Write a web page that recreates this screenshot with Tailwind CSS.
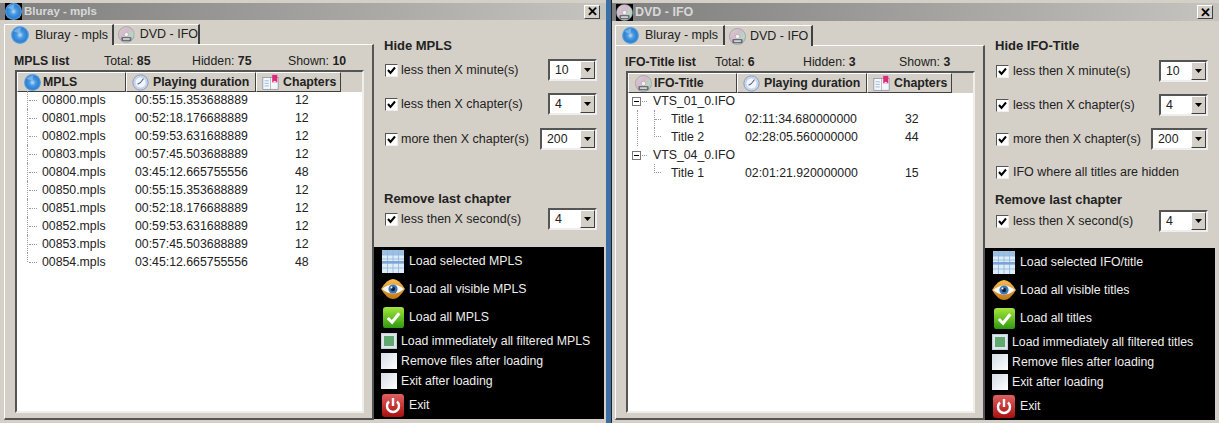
<!DOCTYPE html>
<html lang="en">
<head>
  <meta charset="UTF-8" />
  <title>Bluray - mpls | DVD - IFO</title>
  <script src="https://cdn.jsdelivr.net/npm/@tailwindcss/browser@4"></script>
</head>
<body class="bg-[#d4d0c8] overflow-hidden font-['Liberation_Sans',sans-serif] text-[12.3px] text-[#222]">

  <!-- Shared icons -->
  <svg class="absolute w-0 h-0">
    <defs>
      <radialGradient id="blu" cx="50%" cy="50%" r="55%"><stop offset="0" stop-color="#a8d8f8"/><stop offset=".35" stop-color="#4a98e0"/><stop offset=".7" stop-color="#2f80d0"/><stop offset="1" stop-color="#7cbcec"/></radialGradient>
      <linearGradient id="dvdg" x1="0" y1="0" x2="1" y2="1"><stop offset="0" stop-color="#c9d6c8"/><stop offset=".4" stop-color="#d8b8cc"/><stop offset=".7" stop-color="#b8d8c0"/><stop offset="1" stop-color="#b0b0c0"/></linearGradient>
      <linearGradient id="grn" x1="0" y1="0" x2="0" y2="1"><stop offset="0" stop-color="#a4e63c"/><stop offset="1" stop-color="#2f9a10"/></linearGradient>
      <linearGradient id="red" x1="0" y1="0" x2="0" y2="1"><stop offset="0" stop-color="#e06060"/><stop offset="1" stop-color="#a81010"/></linearGradient>
      <linearGradient id="iris" x1="0" y1="0" x2="0" y2="1"><stop offset="0" stop-color="#f8bc50"/><stop offset="1" stop-color="#c07818"/></linearGradient>
      <symbol id="i-blu" viewBox="0 0 20 20"><circle cx="10" cy="10" r="10" fill="url(#blu)"/><path d="M3 6Q6 2 11 1.500L10 8Z" fill="#a8d4f6" opacity=".5"/><circle cx="10" cy="10" r="1.600" fill="#9fd0f5"/></symbol>
      <symbol id="i-dvd" viewBox="0 0 20 20"><circle cx="10" cy="10" r="9.500" fill="url(#dvdg)" stroke="#8f8f9a" stroke-width=".7"/><circle cx="10" cy="10" r="2.600" fill="#f2f2f2" stroke="#888" stroke-width=".5"/><rect x="4" y="13" width="12" height="5" rx="1" fill="#6d6d78"/><rect x="6" y="14.500" width="8" height="1.800" fill="#e4e4e4"/></symbol>
      <symbol id="i-clock" viewBox="0 0 20 20"><circle cx="10" cy="10" r="9" fill="#c9d8ee" stroke="#7d92b8"/><circle cx="10" cy="10" r="6.500" fill="#f2f6fc" stroke="#a8b8d0" stroke-width=".6"/><path d="M10 10L13.500 5.500M10 10L6.500 12" stroke="#55658a" stroke-width="1.200" fill="none"/></symbol>
      <symbol id="i-book" viewBox="0 0 20 20"><rect x="1" y="4" width="18" height="14" fill="#f4f6fa" stroke="#7a869a" stroke-width=".8"/><path d="M10 4V18" stroke="#9aa4b4" stroke-width=".8"/><path d="M3 8H8M3 11H8M3 14H8" stroke="#8fb0d8"/><rect x="12" y="1" width="6" height="9" fill="#e0287c"/><path d="M12 10L15 8L18 10Z" fill="#f4f6fa"/></symbol>
      <symbol id="i-grid" viewBox="0 0 22 23"><rect width="22" height="23" fill="#dcecf8"/><rect y="0" width="22" height="5" fill="#9cc0e4"/><path d="M0 5H22M0 9H22M0 13H22M0 18H22M5.500 0V23M11 0V23M16.500 0V23" stroke="#8fb4da" stroke-width=".8"/><rect y="11" width="22" height="2.500" fill="#7ca4d4"/></symbol>
      <symbol id="i-eye" viewBox="0 0 24 20"><path d="M0 10Q12 -10 24 10Q12 30 0 10Z" fill="url(#iris)"/><path d="M1 10Q12 1 23 10Q12 19 1 10Z" fill="#f8fafc"/><circle cx="12" cy="10" r="4.600" fill="#3c78b8"/><circle cx="12" cy="10" r="2.200" fill="#10203a"/><circle cx="10.500" cy="8.500" r="1" fill="#fff"/></symbol>
      <symbol id="i-check" viewBox="0 0 22 22"><rect width="22" height="22" rx="3" fill="url(#grn)"/><path d="M5 11.500L9.500 16L17 6.500" fill="none" stroke="#fff" stroke-width="3.200"/></symbol>
      <symbol id="i-power" viewBox="0 0 22 23"><rect width="22" height="23" rx="3" fill="url(#red)"/><path d="M7 7.500A6 6 0 1 0 15 7.500" fill="none" stroke="#fff" stroke-width="2.400"/><path d="M11 4V12" stroke="#fff" stroke-width="2.400"/></symbol>
      <symbol id="i-tick" viewBox="0 0 9 9"><path d="M1 4L3.500 7L8 1.500" fill="none" stroke="#000" stroke-width="2"/></symbol>
      <symbol id="i-arrow" viewBox="0 0 7 4"><path d="M0 0H7L3.500 4Z" fill="#000"/></symbol>
    </defs>
  </svg>

  <div class="flex w-[1219px] h-[423px]">

    <!-- Bluray window -->
    <div class="w-[606px] h-[423px] pt-[3px] flex flex-col">
      <div class="h-[17px] flex items-center bg-gradient-to-r from-[#7e7e7e] to-[#c6c4bf] text-[#d8d8d8] font-bold text-[11.5px] pr-[6px]">
        <span class="w-[17px] h-[17px] bg-black flex items-center justify-center ml-[5px] mr-[2px]"><svg class="w-[17px] h-[17px]"><use href="#i-blu"/></svg></span>
        <span class="flex-1">Bluray - mpls</span>
        <span class="w-[16px] h-[14px] bg-[#d4d0c8] border border-t-white border-l-white border-r-[#404040] border-b-[#404040] flex items-center justify-center text-black text-[13px] font-bold leading-none">✕</span>
      </div>
      <div class="flex flex-1">
        <div class="w-[374px] pl-[4px] pt-[3px] flex flex-col">
          <div class="flex h-[21px] items-end relative z-10">
            <div class="w-[110px] h-[21px] -mb-px flex items-center bg-[#d4d0c8] border-t border-l border-white border-r-2 border-r-[#404040] pl-[6px] gap-[6px] text-[12.5px] whitespace-nowrap">
              <svg class="w-[18px] h-[18px]"><use href="#i-blu"/></svg>Bluray - mpls
            </div>
            <div class="w-[86px] h-[20px] flex items-center bg-[#d4d0c8] border-t border-white border-r-2 border-r-[#404040] pl-[4px] gap-[5px] text-[12.5px] whitespace-nowrap">
              <svg class="w-[17px] h-[17px]"><use href="#i-dvd"/></svg>DVD - IFO
            </div>
          </div>
          <div class="w-[370px] h-[376px] border-t border-l border-white border-r-2 border-b-2 border-r-[#555] border-b-[#555] pl-[10px] pr-[8px] flex flex-col">
            <div class="h-[25px] pt-[7px] -ml-[1px] flex items-center font-bold">
              <span class="w-[90px]">MPLS list</span>
              <span class="w-[88px] font-normal">Total: <b>85</b></span>
              <span class="w-[96px] font-normal">Hidden: <b>75</b></span>
              <span class="font-normal">Shown: <b>10</b></span>
            </div>
            <div class="w-[349px] h-[343px] border-2 border-t-[#555] border-l-[#555] border-r-[#efeee9] border-b-[#efeee9] bg-white flex flex-col">
              <div class="h-[20px] flex bg-[#d4d0c8] font-bold">
                <div class="w-[109px] flex items-center gap-[2px] pl-[6px] border border-t-white border-l-white border-r-[#404040] border-b-[#404040]"><svg class="w-[17px] h-[17px]"><use href="#i-blu"/></svg>MPLS</div>
                <div class="w-[130px] flex items-center gap-[4px] pl-[5px] border border-t-white border-l-white border-r-[#404040] border-b-[#404040]"><svg class="w-[17px] h-[17px]"><use href="#i-clock"/></svg>Playing duration</div>
                <div class="w-[85px] flex items-center gap-[4px] pl-[5px] border border-t-white border-l-white border-r-[#404040] border-b-[#404040]"><svg class="w-[17px] h-[17px]"><use href="#i-book"/></svg>Chapters</div>
              </div>
              <div class="-mt-[1px]">
                <div class="h-[18px] flex items-center"><span class="w-[2px] h-[18px] ml-[10px] border-l border-dotted border-[#999]"></span><span class="w-[8px] border-t border-dotted border-[#999] mr-[5px]"></span><span class="w-[93px]">00800.mpls</span><span class="w-[160px]">00:55:15.353688889</span><span>12</span></div>
                <div class="h-[18px] flex items-center"><span class="w-[2px] h-[18px] ml-[10px] border-l border-dotted border-[#999]"></span><span class="w-[8px] border-t border-dotted border-[#999] mr-[5px]"></span><span class="w-[93px]">00801.mpls</span><span class="w-[160px]">00:52:18.176688889</span><span>12</span></div>
                <div class="h-[18px] flex items-center"><span class="w-[2px] h-[18px] ml-[10px] border-l border-dotted border-[#999]"></span><span class="w-[8px] border-t border-dotted border-[#999] mr-[5px]"></span><span class="w-[93px]">00802.mpls</span><span class="w-[160px]">00:59:53.631688889</span><span>12</span></div>
                <div class="h-[18px] flex items-center"><span class="w-[2px] h-[18px] ml-[10px] border-l border-dotted border-[#999]"></span><span class="w-[8px] border-t border-dotted border-[#999] mr-[5px]"></span><span class="w-[93px]">00803.mpls</span><span class="w-[160px]">00:57:45.503688889</span><span>12</span></div>
                <div class="h-[18px] flex items-center"><span class="w-[2px] h-[18px] ml-[10px] border-l border-dotted border-[#999]"></span><span class="w-[8px] border-t border-dotted border-[#999] mr-[5px]"></span><span class="w-[93px]">00804.mpls</span><span class="w-[160px]">03:45:12.665755556</span><span>48</span></div>
                <div class="h-[18px] flex items-center"><span class="w-[2px] h-[18px] ml-[10px] border-l border-dotted border-[#999]"></span><span class="w-[8px] border-t border-dotted border-[#999] mr-[5px]"></span><span class="w-[93px]">00850.mpls</span><span class="w-[160px]">00:55:15.353688889</span><span>12</span></div>
                <div class="h-[18px] flex items-center"><span class="w-[2px] h-[18px] ml-[10px] border-l border-dotted border-[#999]"></span><span class="w-[8px] border-t border-dotted border-[#999] mr-[5px]"></span><span class="w-[93px]">00851.mpls</span><span class="w-[160px]">00:52:18.176688889</span><span>12</span></div>
                <div class="h-[18px] flex items-center"><span class="w-[2px] h-[18px] ml-[10px] border-l border-dotted border-[#999]"></span><span class="w-[8px] border-t border-dotted border-[#999] mr-[5px]"></span><span class="w-[93px]">00852.mpls</span><span class="w-[160px]">00:59:53.631688889</span><span>12</span></div>
                <div class="h-[18px] flex items-center"><span class="w-[2px] h-[18px] ml-[10px] border-l border-dotted border-[#999]"></span><span class="w-[8px] border-t border-dotted border-[#999] mr-[5px]"></span><span class="w-[93px]">00853.mpls</span><span class="w-[160px]">00:57:45.503688889</span><span>12</span></div>
                <div class="h-[18px] flex items-center"><span class="w-[2px] h-[9px] self-start ml-[10px] border-l border-dotted border-[#999]"></span><span class="w-[8px] border-t border-dotted border-[#999] mr-[5px]"></span><span class="w-[93px]">00854.mpls</span><span class="w-[160px]">03:45:12.665755556</span><span>48</span></div>
              </div>
            </div>
          </div>
        </div>
        <div class="w-[232px] flex flex-col">
          <div class="h-[227px] pl-[10px] pr-[9px] pt-[18px] flex flex-col">
            <div class="h-[16px] flex items-center font-bold text-[13px]">Hide MPLS</div>
            <div class="h-[22px] mt-[5px] flex items-center"><span class="w-[13px] h-[13px] ml-[1px] mr-[3px] bg-white border border-t-[#555] border-l-[#555] border-r-[#eee] border-b-[#eee] flex items-center justify-center"><svg class="w-[9px] h-[9px]"><use href="#i-tick"/></svg></span><span class="flex-1 text-[12.5px]">less then X minute(s)</span><span class="w-[49px] h-[22px] bg-white border-2 border-t-[#555] border-l-[#555] border-r-[#eee] border-b-[#eee] flex items-center pl-[5px]"><span class="flex-1">10</span><span class="w-[15px] h-[18px] bg-[#d4d0c8] border border-t-white border-l-white border-r-[#404040] border-b-[#404040] flex items-center justify-center"><svg class="w-[7px] h-[4px]"><use href="#i-arrow"/></svg></span></span></div>
            <div class="h-[22px] mt-[12px] flex items-center"><span class="w-[13px] h-[13px] ml-[1px] mr-[3px] bg-white border border-t-[#555] border-l-[#555] border-r-[#eee] border-b-[#eee] flex items-center justify-center"><svg class="w-[9px] h-[9px]"><use href="#i-tick"/></svg></span><span class="flex-1 text-[12.5px]">less then X chapter(s)</span><span class="w-[49px] h-[22px] bg-white border-2 border-t-[#555] border-l-[#555] border-r-[#eee] border-b-[#eee] flex items-center pl-[5px]"><span class="flex-1">4</span><span class="w-[15px] h-[18px] bg-[#d4d0c8] border border-t-white border-l-white border-r-[#404040] border-b-[#404040] flex items-center justify-center"><svg class="w-[7px] h-[4px]"><use href="#i-arrow"/></svg></span></span></div>
            <div class="h-[22px] mt-[13px] flex items-center"><span class="w-[13px] h-[13px] ml-[1px] mr-[3px] bg-white border border-t-[#555] border-l-[#555] border-r-[#eee] border-b-[#eee] flex items-center justify-center"><svg class="w-[9px] h-[9px]"><use href="#i-tick"/></svg></span><span class="flex-1 text-[12.5px]">more then X chapter(s)</span><span class="w-[57px] h-[22px] bg-white border-2 border-t-[#555] border-l-[#555] border-r-[#eee] border-b-[#eee] flex items-center pl-[5px]"><span class="flex-1">200</span><span class="w-[15px] h-[18px] bg-[#d4d0c8] border border-t-white border-l-white border-r-[#404040] border-b-[#404040] flex items-center justify-center"><svg class="w-[7px] h-[4px]"><use href="#i-arrow"/></svg></span></span></div>
            <div class="h-[16px] mt-[41px] flex items-center font-bold text-[13px]">Remove last chapter</div>
            <div class="h-[22px] mt-[1px] flex items-center"><span class="w-[13px] h-[13px] ml-[1px] mr-[3px] bg-white border border-t-[#555] border-l-[#555] border-r-[#eee] border-b-[#eee] flex items-center justify-center"><svg class="w-[9px] h-[9px]"><use href="#i-tick"/></svg></span><span class="flex-1 text-[12.5px]">less then X second(s)</span><span class="w-[49px] h-[22px] bg-white border-2 border-t-[#555] border-l-[#555] border-r-[#eee] border-b-[#eee] flex items-center pl-[5px]"><span class="flex-1">4</span><span class="w-[15px] h-[18px] bg-[#d4d0c8] border border-t-white border-l-white border-r-[#404040] border-b-[#404040] flex items-center justify-center"><svg class="w-[7px] h-[4px]"><use href="#i-arrow"/></svg></span></span></div>
          </div>
          <div class="w-[230px] h-[172px] bg-black text-[#eee]">
            <div class="h-[28px] flex items-center pl-[8px] gap-[5px]"><span class="w-[22px] flex justify-center"><svg class="w-[22px] h-[23px]"><use href="#i-grid"/></svg></span>Load selected MPLS</div>
            <div class="h-[28px] flex items-center pl-[8px] gap-[5px]"><span class="w-[22px] flex justify-center"><svg class="w-[24px] h-[20px] shrink-0"><use href="#i-eye"/></svg></span>Load all visible MPLS</div>
            <div class="h-[28px] flex items-center pl-[8px] gap-[5px]"><span class="w-[22px] flex justify-center"><svg class="w-[21px] h-[21px]"><use href="#i-check"/></svg></span>Load all MPLS</div>
            <div class="h-[20px] flex items-center pl-[7px] gap-[4px]"><span class="w-[16px] h-[16px] bg-[#dfe5ea] border border-[#c4d0dc] flex items-center justify-center"><span class="w-[10px] h-[10px] bg-[#5fa870]"></span></span>Load immediately all filtered MPLS</div>
            <div class="h-[20px] flex items-center pl-[7px] gap-[4px]"><span class="w-[16px] h-[16px] bg-gradient-to-br from-[#d4dce6] to-white"></span>Remove files after loading</div>
            <div class="h-[20px] flex items-center pl-[7px] gap-[4px]"><span class="w-[16px] h-[16px] bg-gradient-to-br from-[#d4dce6] to-white"></span>Exit after loading</div>
            <div class="h-[28px] flex items-center pl-[8px] gap-[5px]"><span class="w-[22px] flex justify-center"><svg class="w-[22px] h-[23px]"><use href="#i-power"/></svg></span>Exit</div>
          </div>
        </div>
      </div>
    </div>

    <!-- Desktop gap between the windows -->
    <div class="w-[6px] h-[423px] bg-[#3a6ea5] border-r border-[#222]"></div>

    <!-- DVD window -->
    <div class="w-[607px] h-[423px] pt-[3px] flex flex-col">
      <div class="h-[18px] flex items-center bg-gradient-to-r from-[#7e7e7e] to-[#c6c4bf] text-[#d8d8d8] font-bold text-[12.5px] pr-[6px]">
        <span class="w-[17px] h-[17px] bg-black flex items-center justify-center ml-[4px] mr-[2px]"><svg class="w-[17px] h-[17px]"><use href="#i-dvd"/></svg></span>
        <span class="flex-1">DVD - IFO</span>
        <span class="w-[16px] h-[14px] bg-[#d4d0c8] border border-t-white border-l-white border-r-[#404040] border-b-[#404040] flex items-center justify-center text-black text-[13px] font-bold leading-none">✕</span>
      </div>
      <div class="flex flex-1">
        <div class="w-[373px] pl-[3px] pt-[3px] flex flex-col">
          <div class="flex h-[21px] items-end relative z-10">
            <div class="w-[110px] h-[20px] flex items-center bg-[#d4d0c8] border-t border-l border-white border-r-2 border-r-[#404040] pl-[6px] gap-[6px] text-[12.5px] whitespace-nowrap">
              <svg class="w-[17px] h-[17px]"><use href="#i-blu"/></svg>Bluray - mpls
            </div>
            <div class="w-[88px] h-[21px] -mb-px flex items-center bg-[#d4d0c8] border-t border-white border-r-2 border-r-[#404040] pl-[4px] gap-[4px] text-[12.5px] whitespace-nowrap">
              <svg class="w-[17px] h-[17px]"><use href="#i-dvd"/></svg>DVD - IFO
            </div>
          </div>
          <div class="w-[370px] h-[375px] border-t border-l border-white border-r-2 border-b-2 border-r-[#555] border-b-[#555] pl-[10px] pr-[8px] flex flex-col">
            <div class="h-[25px] pt-[7px] -ml-[1px] flex items-center font-bold">
              <span class="w-[90px]">IFO-Title list</span>
              <span class="w-[88px] font-normal">Total: <b>6</b></span>
              <span class="w-[96px] font-normal">Hidden: <b>3</b></span>
              <span class="font-normal">Shown: <b>3</b></span>
            </div>
            <div class="w-[349px] h-[342px] border-2 border-t-[#555] border-l-[#555] border-r-[#efeee9] border-b-[#efeee9] bg-white flex flex-col">
              <div class="h-[20px] flex bg-[#d4d0c8] font-bold">
                <div class="w-[109px] flex items-center gap-[2px] pl-[6px] border border-t-white border-l-white border-r-[#404040] border-b-[#404040]"><svg class="w-[17px] h-[17px]"><use href="#i-dvd"/></svg>IFO-Title</div>
                <div class="w-[130px] flex items-center gap-[4px] pl-[5px] border border-t-white border-l-white border-r-[#404040] border-b-[#404040]"><svg class="w-[17px] h-[17px]"><use href="#i-clock"/></svg>Playing duration</div>
                <div class="w-[85px] flex items-center gap-[4px] pl-[5px] border border-t-white border-l-white border-r-[#404040] border-b-[#404040]"><svg class="w-[17px] h-[17px]"><use href="#i-book"/></svg>Chapters</div>
              </div>
              <div class="-mt-[1px]">
                <div class="h-[18px] flex items-center pl-[4px]"><span class="w-[9px] h-[9px] border border-[#777] flex items-center justify-center mr-[1px]"><span class="w-[5px] border-t border-black"></span></span><span class="w-[5px] border-t border-dotted border-[#999] mr-[6px]"></span>VTS_01_0.IFO</div>
                <div class="h-[18px] flex items-center pl-[9px]"><span class="w-[17px] h-[18px] border-l border-dotted border-[#999]"></span><span class="w-[7px] h-[18px] border-l border-dotted border-[#999] flex items-center"><span class="w-[6px] border-t border-dotted border-[#999]"></span></span><span class="w-[10px]"></span><span class="w-[74px]">Title 1</span><span class="w-[160px]">02:11:34.680000000</span><span>32</span></div>
                <div class="h-[18px] flex items-center pl-[9px]"><span class="w-[17px] h-[18px] border-l border-dotted border-[#999]"></span><span class="w-[7px] h-[9px] self-start border-l border-b border-dotted border-[#999]"></span><span class="w-[10px]"></span><span class="w-[74px]">Title 2</span><span class="w-[160px]">02:28:05.560000000</span><span>44</span></div>
                <div class="h-[18px] flex items-center pl-[4px]"><span class="w-[9px] h-[9px] border border-[#777] flex items-center justify-center mr-[1px]"><span class="w-[5px] border-t border-black"></span></span><span class="w-[5px] border-t border-dotted border-[#999] mr-[6px]"></span>VTS_04_0.IFO</div>
                <div class="h-[18px] flex items-center pl-[9px]"><span class="w-[17px] h-[18px]"></span><span class="w-[7px] h-[9px] self-start border-l border-b border-dotted border-[#999]"></span><span class="w-[10px]"></span><span class="w-[74px]">Title 1</span><span class="w-[160px]">02:01:21.920000000</span><span>15</span></div>
              </div>
            </div>
          </div>
        </div>
        <div class="w-[233px] flex flex-col">
          <div class="h-[227px] pl-[10px] pr-[10px] pt-[17px] flex flex-col">
            <div class="h-[16px] flex items-center font-bold text-[13px]">Hide IFO-Title</div>
            <div class="h-[22px] mt-[6px] flex items-center"><span class="w-[13px] h-[13px] ml-[1px] mr-[4px] bg-white border border-t-[#555] border-l-[#555] border-r-[#eee] border-b-[#eee] flex items-center justify-center"><svg class="w-[9px] h-[9px]"><use href="#i-tick"/></svg></span><span class="flex-1 text-[12.5px]">less then X minute(s)</span><span class="w-[49px] h-[22px] bg-white border-2 border-t-[#555] border-l-[#555] border-r-[#eee] border-b-[#eee] flex items-center pl-[5px]"><span class="flex-1">10</span><span class="w-[15px] h-[18px] bg-[#d4d0c8] border border-t-white border-l-white border-r-[#404040] border-b-[#404040] flex items-center justify-center"><svg class="w-[7px] h-[4px]"><use href="#i-arrow"/></svg></span></span></div>
            <div class="h-[22px] mt-[12px] flex items-center"><span class="w-[13px] h-[13px] ml-[1px] mr-[4px] bg-white border border-t-[#555] border-l-[#555] border-r-[#eee] border-b-[#eee] flex items-center justify-center"><svg class="w-[9px] h-[9px]"><use href="#i-tick"/></svg></span><span class="flex-1 text-[12.5px]">less then X chapter(s)</span><span class="w-[49px] h-[22px] bg-white border-2 border-t-[#555] border-l-[#555] border-r-[#eee] border-b-[#eee] flex items-center pl-[5px]"><span class="flex-1">4</span><span class="w-[15px] h-[18px] bg-[#d4d0c8] border border-t-white border-l-white border-r-[#404040] border-b-[#404040] flex items-center justify-center"><svg class="w-[7px] h-[4px]"><use href="#i-arrow"/></svg></span></span></div>
            <div class="h-[22px] mt-[12px] flex items-center"><span class="w-[13px] h-[13px] ml-[1px] mr-[4px] bg-white border border-t-[#555] border-l-[#555] border-r-[#eee] border-b-[#eee] flex items-center justify-center"><svg class="w-[9px] h-[9px]"><use href="#i-tick"/></svg></span><span class="flex-1 text-[12.5px]">more then X chapter(s)</span><span class="w-[57px] h-[22px] bg-white border-2 border-t-[#555] border-l-[#555] border-r-[#eee] border-b-[#eee] flex items-center pl-[5px]"><span class="flex-1">200</span><span class="w-[15px] h-[18px] bg-[#d4d0c8] border border-t-white border-l-white border-r-[#404040] border-b-[#404040] flex items-center justify-center"><svg class="w-[7px] h-[4px]"><use href="#i-arrow"/></svg></span></span></div>
            <div class="h-[22px] mt-[11px] flex items-center"><span class="w-[13px] h-[13px] ml-[1px] mr-[4px] bg-white border border-t-[#555] border-l-[#555] border-r-[#eee] border-b-[#eee] flex items-center justify-center"><svg class="w-[9px] h-[9px]"><use href="#i-tick"/></svg></span><span class="text-[12.5px]">IFO where all titles are hidden</span></div>
            <div class="h-[16px] mt-[9px] flex items-center font-bold text-[13px]">Remove last chapter</div>
            <div class="h-[22px] mt-[2px] flex items-center"><span class="w-[13px] h-[13px] ml-[1px] mr-[4px] bg-white border border-t-[#555] border-l-[#555] border-r-[#eee] border-b-[#eee] flex items-center justify-center"><svg class="w-[9px] h-[9px]"><use href="#i-tick"/></svg></span><span class="flex-1 text-[12.5px]">less then X second(s)</span><span class="w-[49px] h-[22px] bg-white border-2 border-t-[#555] border-l-[#555] border-r-[#eee] border-b-[#eee] flex items-center pl-[5px]"><span class="flex-1">4</span><span class="w-[15px] h-[18px] bg-[#d4d0c8] border border-t-white border-l-white border-r-[#404040] border-b-[#404040] flex items-center justify-center"><svg class="w-[7px] h-[4px]"><use href="#i-arrow"/></svg></span></span></div>
          </div>
          <div class="w-[230px] h-[172px] bg-black text-[#eee]">
            <div class="h-[28px] flex items-center pl-[8px] gap-[5px]"><span class="w-[22px] flex justify-center"><svg class="w-[22px] h-[23px]"><use href="#i-grid"/></svg></span>Load selected IFO/title</div>
            <div class="h-[28px] flex items-center pl-[8px] gap-[5px]"><span class="w-[22px] flex justify-center"><svg class="w-[24px] h-[20px] shrink-0"><use href="#i-eye"/></svg></span>Load all visible titles</div>
            <div class="h-[28px] flex items-center pl-[8px] gap-[5px]"><span class="w-[22px] flex justify-center"><svg class="w-[21px] h-[21px]"><use href="#i-check"/></svg></span>Load all titles</div>
            <div class="h-[20px] flex items-center pl-[7px] gap-[4px]"><span class="w-[16px] h-[16px] bg-[#dfe5ea] border border-[#c4d0dc] flex items-center justify-center"><span class="w-[10px] h-[10px] bg-[#5fa870]"></span></span>Load immediately all filtered titles</div>
            <div class="h-[20px] flex items-center pl-[7px] gap-[4px]"><span class="w-[16px] h-[16px] bg-gradient-to-br from-[#d4dce6] to-white"></span>Remove files after loading</div>
            <div class="h-[20px] flex items-center pl-[7px] gap-[4px]"><span class="w-[16px] h-[16px] bg-gradient-to-br from-[#d4dce6] to-white"></span>Exit after loading</div>
            <div class="h-[28px] flex items-center pl-[8px] gap-[5px]"><span class="w-[22px] flex justify-center"><svg class="w-[22px] h-[23px]"><use href="#i-power"/></svg></span>Exit</div>
          </div>
        </div>
      </div>
    </div>
  </div>
</body>
</html>
